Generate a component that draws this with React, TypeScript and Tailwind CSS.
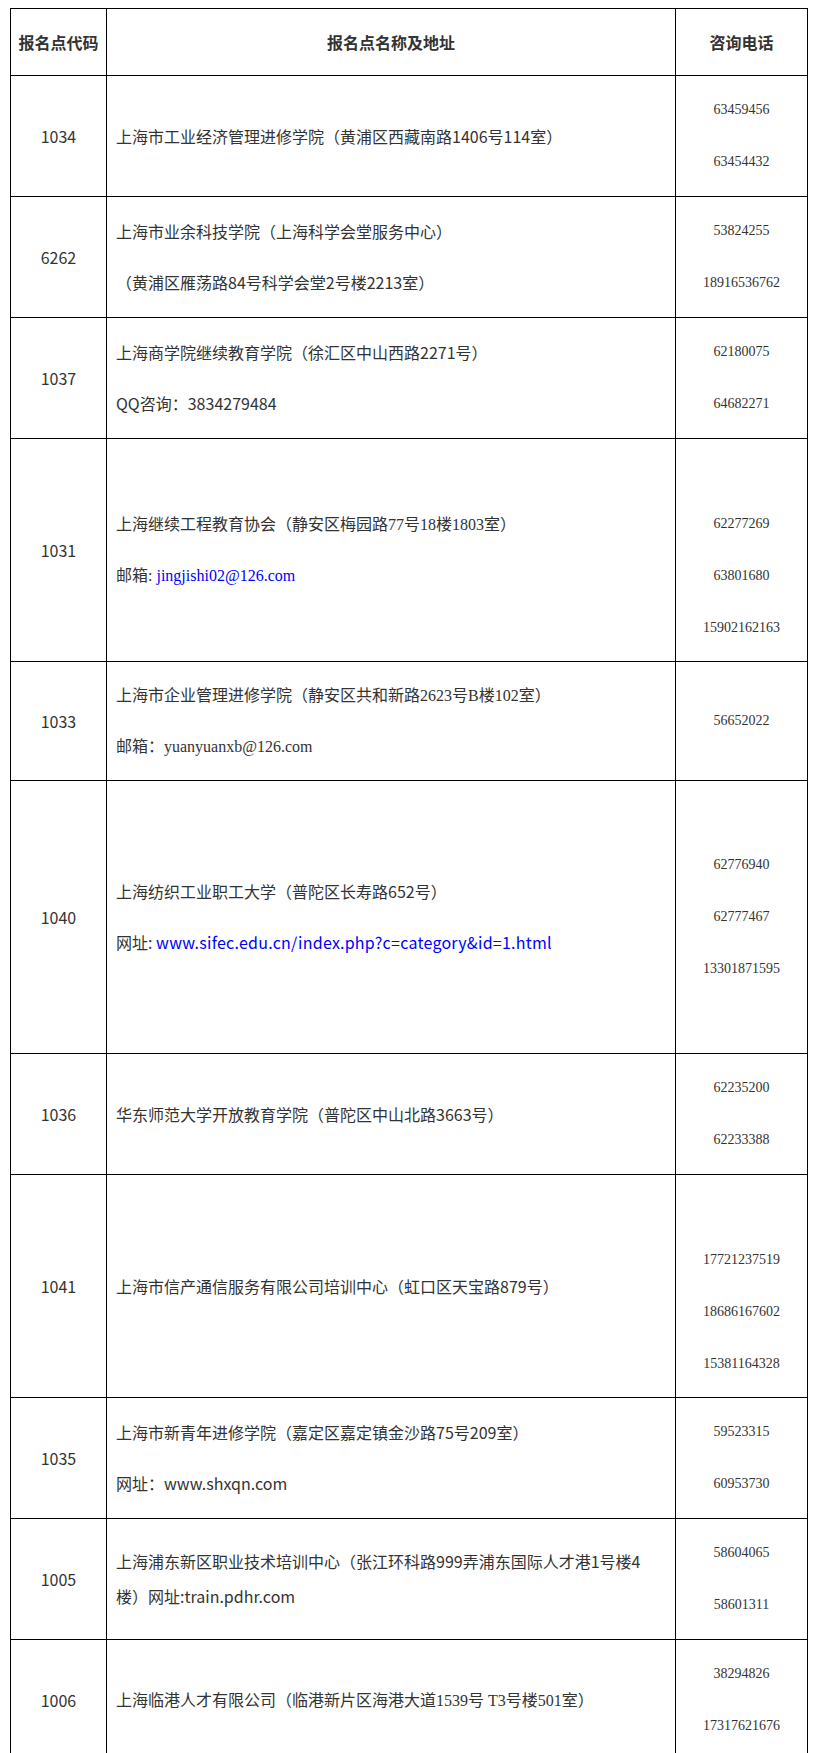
import type { ReactNode } from "react";

const sans = "font-['Noto_Sans_CJK_SC',sans-serif]";
const serif = "font-['Liberation_Serif','Noto_Sans_CJK_SC',serif]";

type Row = {
  code: string;
  h: string;
  lines: ReactNode[];
  phones: string[];
  blankTop?: boolean;
};

const Link = ({ children, className = "" }: { children: ReactNode; className?: string }) => (
  <span className={`text-[#0000ff] ${className}`}>{children}</span>
);

const rows: Row[] = [
  {
    code: "1034",
    h: "h-[121px]",
    lines: [<span className={sans}>上海市工业经济管理进修学院（黄浦区西藏南路1406号114室）</span>],
    phones: ["63459456", "63454432"],
  },
  {
    code: "6262",
    h: "h-[121px]",
    lines: [
      <span className={sans}>上海市业余科技学院（上海科学会堂服务中心）</span>,
      <span className={sans}>（黄浦区雁荡路84号科学会堂2号楼2213室）</span>,
    ],
    phones: ["53824255", "18916536762"],
  },
  {
    code: "1037",
    h: "h-[121px]",
    lines: [
      <span className={sans}>上海商学院继续教育学院（徐汇区中山西路2271号）</span>,
      <span className={sans}>QQ咨询：3834279484</span>,
    ],
    phones: ["62180075", "64682271"],
  },
  {
    code: "1031",
    h: "h-[223px]",
    lines: [
      <span className={serif}>上海继续工程教育协会（静安区梅园路77号18楼1803室）</span>,
      <span className={serif}>
        邮箱: <Link>jingjishi02@126.com</Link>
      </span>,
    ],
    phones: ["62277269", "63801680", "15902162163"],
    blankTop: true,
  },
  {
    code: "1033",
    h: "h-[119px]",
    lines: [
      <span className={serif}>上海市企业管理进修学院（静安区共和新路2623号B楼102室）</span>,
      <span className={serif}>邮箱：yuanyuanxb@126.com</span>,
    ],
    phones: ["56652022"],
  },
  {
    code: "1040",
    h: "h-[273px]",
    lines: [
      <span className={sans}>上海纺织工业职工大学（普陀区长寿路652号）</span>,
      <span className={sans}>
        网址: <Link className="tracking-[0.25px]">www.sifec.edu.cn/index.php?c=category&amp;id=1.html</Link>
      </span>,
    ],
    phones: ["62776940", "62777467", "13301871595"],
  },
  {
    code: "1036",
    h: "h-[121px]",
    lines: [<span className={sans}>华东师范大学开放教育学院（普陀区中山北路3663号）</span>],
    phones: ["62235200", "62233388"],
  },
  {
    code: "1041",
    h: "h-[223px]",
    lines: [<span className={sans}>上海市信产通信服务有限公司培训中心（虹口区天宝路879号）</span>],
    phones: ["17721237519", "18686167602", "15381164328"],
    blankTop: true,
  },
  {
    code: "1035",
    h: "h-[121px]",
    lines: [
      <span className={sans}>上海市新青年进修学院（嘉定区嘉定镇金沙路75号209室）</span>,
      <span className={sans}>网址：www.shxqn.com</span>,
    ],
    phones: ["59523315", "60953730"],
  },
  {
    code: "1005",
    h: "h-[121px]",
    lines: [
      <span className={sans}>
        上海浦东新区职业技术培训中心（张江环科路999弄浦东国际人才港1号楼4楼）网址:train.pdhr.com
      </span>,
    ],
    phones: ["58604065", "58601311"],
  },
  {
    code: "1006",
    h: "h-[121px]",
    lines: [<span className={serif}>上海临港人才有限公司（临港新片区海港大道1539号 T3号楼501室）</span>],
    phones: ["38294826", "17317621676"],
  },
];

function TableRow({ row }: { row: Row }) {
  return (
    <div className={`flex border-b border-black ${row.h}`}>
      <div className={`flex w-[96px] shrink-0 items-center justify-center border-r border-black text-[16px] text-[#333] ${sans}`}>
        {row.code}
      </div>
      <div className="flex w-[569px] shrink-0 flex-col justify-center gap-[16px] border-r border-black pl-[9px] pr-[24px] text-[16px] leading-[34px] text-[#333]">
        {row.lines.map((l, i) => (
          <div key={i}>{l}</div>
        ))}
      </div>
      <div className={`flex w-[132px] shrink-0 flex-col items-center justify-center gap-[26px] border-r border-black text-[14px] leading-[26px] text-[#333] ${serif}`}>
        {row.blankTop && <div className="h-[26px]" />}
        {row.phones.map((p) => (
          <div key={p}>{p}</div>
        ))}
      </div>
    </div>
  );
}

export default function App() {
  return (
    <div className="min-h-[1753px] bg-white pt-[8px] pl-[10px]">
      <div className="w-[798px] border-l border-t border-black">
        <div className={`flex h-[67px] border-b border-black text-[16px] font-bold text-[#333] ${sans}`}>
          <div className="flex w-[96px] shrink-0 items-center justify-center border-r border-black">报名点代码</div>
          <div className="flex w-[569px] shrink-0 items-center justify-center border-r border-black">报名点名称及地址</div>
          <div className="flex w-[132px] shrink-0 items-center justify-center border-r border-black">咨询电话</div>
        </div>
        {rows.map((r) => (
          <TableRow key={r.code} row={r} />
        ))}
      </div>
    </div>
  );
}
